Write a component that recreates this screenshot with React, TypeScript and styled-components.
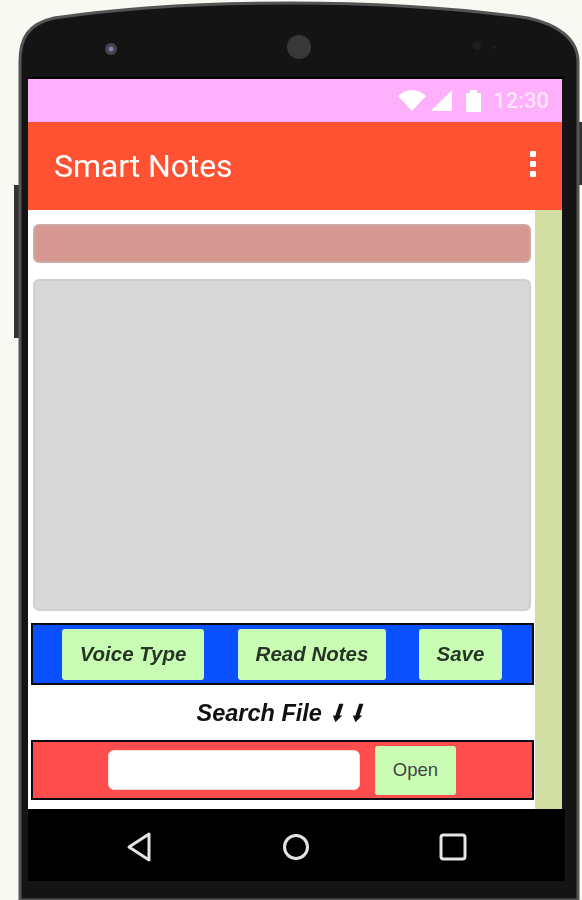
import { FC } from 'react'
import styled, { createGlobalStyle } from 'styled-components'

const Global = createGlobalStyle`
  html, body {
    margin: 0;
    padding: 0;
    height: 900px;
    overflow: hidden;
    background: #f8f9f3;
  }
`

const Phone = styled.div`
  position: relative;
  width: 534px;
  height: 900px;
  margin-left: 28px;
  padding-top: 79px;
  box-sizing: border-box;
  display: flex;
  flex-direction: column;
  filter: blur(0.55px);
  font-family: "Liberation Sans", Arial, sans-serif;
`

const Shell = styled.svg`
  position: absolute;
  left: -28px;
  top: 0;
  z-index: -1;
`

const StatusBar = styled.div`
  height: 43px;
  background: #ffb0fc;
  display: flex;
  align-items: center;
  justify-content: flex-end;
  padding-right: 13px;
  gap: 5px;
  color: #ffe6fe;
`

const StatusIcon = styled.svg<{ $ml?: number }>`
  display: block;
  fill: #fff;
  margin-left: ${p => p.$ml ?? 0}px;
`

const Clock = styled.span`
  font-family: Roboto, sans-serif;
  font-size: 22px;
  font-weight: 500;
  margin-left: 7px;
`

const AppBar = styled.div`
  height: 88px;
  background: #ff5233;
  display: flex;
  align-items: center;
  justify-content: space-between;
  padding: 0 26px 0 26px;
  color: #fff;
`

const AppTitle = styled.div`
  font-family: Roboto, sans-serif;
  font-size: 32px;
  font-weight: 400;
  letter-spacing: -0.1px;
`

const Dots = styled.div`
  display: flex;
  flex-direction: column;
  gap: 4px;
  margin-bottom: 4px;

  i {
    display: block;
    width: 6px;
    height: 6px;
    background: #fff;
    border-radius: 1px;
  }
`

const Body = styled.div`
  height: 599px;
  display: flex;
  background: #fff;
`

const Main = styled.div`
  width: 507px;
  display: flex;
  flex-direction: column;
`

const Strip = styled.div`
  flex: 1;
  background: #d2dea4;
`

const Fields = styled.div`
  height: 413px;
  box-sizing: border-box;
  padding: 14px 4px 12px 5px;
  display: flex;
  flex-direction: column;
  gap: 16px;
`

const Field = styled.div<{ $fill: string; $grow?: boolean }>`
  background: ${p => p.$fill};
  border: 2px solid ${p => (p.$grow ? '#cfcfcf' : '#cfa9a3')};
  border-radius: 6px;
  height: ${p => (p.$grow ? 'auto' : '39px')};
  flex: ${p => (p.$grow ? 1 : 'none')};
  box-sizing: border-box;
`

const Row = styled.div<{ $fill: string; $h: number }>`
  height: ${p => p.$h}px;
  margin: 0 1px 0 3px;
  box-sizing: border-box;
  border: 2px solid #0a0a14;
  background: ${p => p.$fill};
  display: flex;
  align-items: center;
`

const ActionButton = styled.button<{ $w: number; $ml: number }>`
  width: ${p => p.$w}px;
  height: 51px;
  margin-left: ${p => p.$ml}px;
  border: none;
  border-radius: 3px;
  background: #c9fdb3;
  color: #263526;
  padding: 0;
  font: italic bold 20.5px "Liberation Sans", Arial, sans-serif;
`

const SearchLabel = styled.div`
  height: 55px;
  display: flex;
  align-items: center;
  justify-content: center;
  font: italic bold 23.5px "Liberation Sans", Arial, sans-serif;
  color: #111;
  box-sizing: border-box;
  padding: 2px 0 0 2px;
  white-space: pre;
`

const Arrow = styled.span`
  display: inline-block;
  margin-left: 1px;
  transform: translateX(-2px) scaleX(0.7) skewX(-12deg);
  font-size: 23px;
`

const SearchInput = styled.input`
  width: 252px;
  height: 40px;
  margin-left: 75px;
  box-sizing: border-box;
  border: 1px solid #f0dddd;
  border-radius: 6px;
  background: #fff;
`

const OpenButton = styled.button`
  width: 81px;
  height: 49px;
  margin-left: 15px;
  border: none;
  border-radius: 3px;
  background: #c9fdb3;
  color: #444;
  padding: 0;
  font: 18.5px "Liberation Sans", Arial, sans-serif;
`

const NavBar = styled.div`
  height: 72px;
  background: #000;
  display: flex;
  align-items: center;
  justify-content: space-between;
  padding: 4px 95px 0 98px;
  box-sizing: border-box;
`

const NavIcon = styled.svg`
  display: block;
  fill: none;
  stroke: #e4e4e4;
  stroke-width: 3;
`

const App: FC = () => {
  return (
    <>
      <Global />
      <Phone>
        <Shell width="582" height="900" viewBox="0 0 582 900">
          <rect x="14" y="185" width="6" height="153" fill="#333" />
          <rect x="576" y="122" width="6" height="63" fill="#333" />
          <path
            d="M20 900 L20 62 C20 38 28 24 54 18 C130 7 210 3 290 3 C370 3 450 7 528 18 C556 24 578 38 578 62 L578 900 Z"
            fill="#141414"
            stroke="#555"
            strokeWidth="3"
          />
          <rect x="26" y="77" width="538" height="2" fill="#000" />
          <rect x="28" y="809" width="537" height="72" fill="#000" />
          <circle cx="111" cy="49" r="6" fill="#44444f" />
          <circle cx="111" cy="49" r="2.5" fill="#8080a8" />
          <circle cx="299" cy="47" r="12" fill="#383838" />
          <circle cx="477" cy="46" r="4" fill="#1e1e1e" />
          <circle cx="494" cy="47" r="2" fill="#1e1e1e" />
        </Shell>
        <StatusBar>
          <StatusIcon width="28" height="21" viewBox="0 0 28 21">
            <path d="M0 6 C8 -2 20 -2 28 6 L14 21 Z" />
          </StatusIcon>
          <StatusIcon width="21" height="21" viewBox="0 0 21 21">
            <path d="M0 21 L21 0 L21 21 Z" />
          </StatusIcon>
          <StatusIcon width="15" height="22" viewBox="0 0 15 22" $ml={9}>
            <path d="M0 3 H4 V0 H11 V3 H15 V22 H0 Z" />
          </StatusIcon>
          <Clock>12:30</Clock>
        </StatusBar>
        <AppBar>
          <AppTitle>Smart Notes</AppTitle>
          <Dots>
            <i />
            <i />
            <i />
          </Dots>
        </AppBar>
        <Body>
          <Main>
            <Fields>
              <Field $fill="#d69890" />
              <Field $fill="#d8d8d8" $grow />
            </Fields>
            <Row $fill="#0b50ff" $h={62}>
              <ActionButton $w={142} $ml={29}>Voice Type</ActionButton>
              <ActionButton $w={148} $ml={34}>Read Notes</ActionButton>
              <ActionButton $w={83} $ml={33}>Save</ActionButton>
            </Row>
            <SearchLabel>
              {'Search File '}<Arrow>⬇</Arrow><Arrow>⬇</Arrow>
            </SearchLabel>
            <Row $fill="#ff4d4d" $h={60}>
              <SearchInput />
              <OpenButton>Open</OpenButton>
            </Row>
          </Main>
          <Strip />
        </Body>
        <NavBar>
          <NavIcon width="26" height="32" viewBox="0 0 26 32">
            <path d="M23 3 L3 16 L23 29 Z" strokeLinejoin="round" />
          </NavIcon>
          <NavIcon width="28" height="28" viewBox="0 0 28 28">
            <circle cx="14" cy="14" r="11.5" />
          </NavIcon>
          <NavIcon width="28" height="28" viewBox="0 0 28 28">
            <rect x="2" y="2" width="24" height="24" rx="2.5" />
          </NavIcon>
        </NavBar>
      </Phone>
    </>
  )
}

export default App
